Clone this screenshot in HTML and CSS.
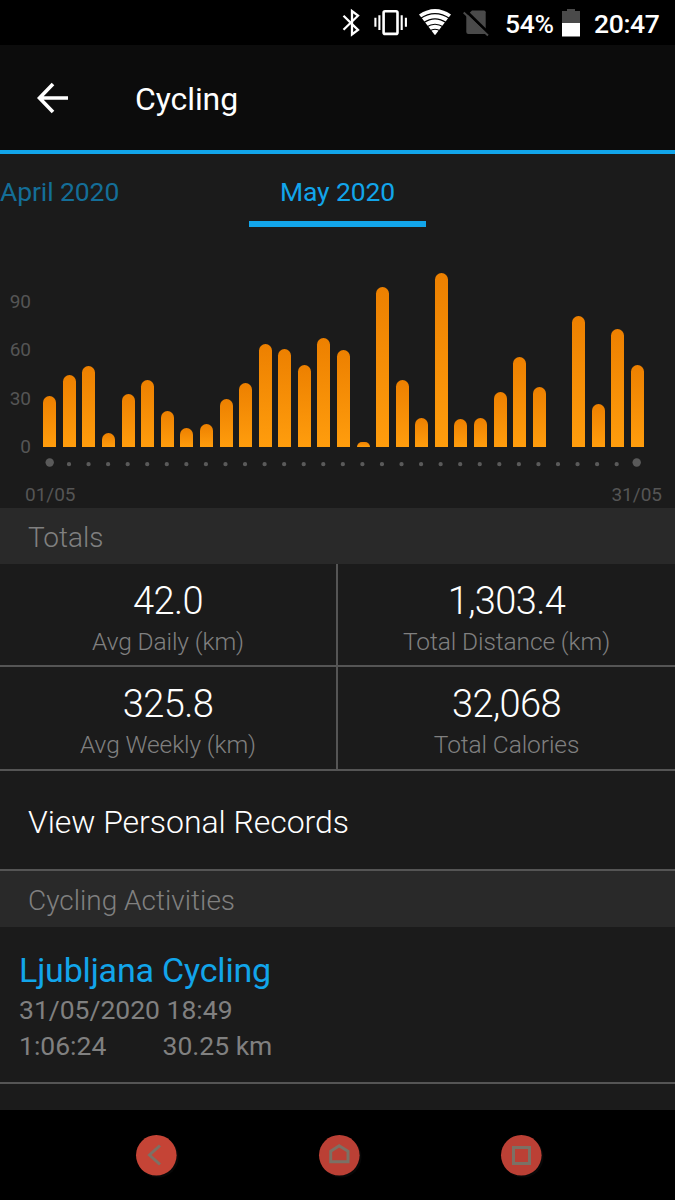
FILE: index.html
```html
<!DOCTYPE html>
<html lang="en">
<head>
<meta charset="utf-8">
<title>Cycling</title>
<link rel="stylesheet" href="styles.css">
</head>
<body>
<div class="screen">
  <div class="status">
    <svg class="status-icons" width="153" height="44" viewBox="0 0 153 44">
      <path d="M2.500 15.800L17 30L11 34.500V11L17 15.700L2.500 29.800" fill="none" stroke="#fff" stroke-width="2.300"/>
      <g fill="none" stroke="#fff">
        <rect x="42.600" y="11.300" width="13.900" height="22.600" rx="1.500" stroke-width="2.600"/>
        <path d="M38.400 15.300v14.700M34.400 17.700v9M60.700 15.300v14.700M64.900 17.700v9" stroke-width="2.100"/>
      </g>
      <path d="M78 14.500Q94 3.500 110 14.500L94 35.300Z" fill="#fff"/>
      <path d="M79 18.700Q94 8.500 109 18.700M82.500 22.800Q94 15 105.500 22.800M85.500 27Q94 21.500 102.500 27M88.500 31Q94 27.500 99.500 31" fill="none" stroke="#000" stroke-width="1.200"/>
      <path d="M125.300 16L131 10.500H143Q144.700 10.500 144.700 12.300V34H127.300Q125.300 34 125.300 32Z" fill="#4a4a4a"/>
      <path d="M124.500 10.500L149 34.500" stroke="#000" stroke-width="3"/>
      <path d="M122.700 12.500L147 35.500" stroke="#4a4a4a" stroke-width="2"/>
    </svg>
    <span class="percent">54%</span>
    <svg class="battery" width="18" height="28" viewBox="0 0 18 28">
      <path d="M5 0h8v2h5v12H0V2h5z" fill="#4a4a4a"/><path d="M0 14h18v13.500H0z" fill="#fff"/>
    </svg>
    <span class="clock">20:47</span>
  </div>
  <header class="appbar">
    <svg class="back" width="34" height="34" viewBox="0 0 34 34"><path d="M17 3L3.500 17L17 31M3.500 17H32" fill="none" stroke="#fff" stroke-width="3.600"/></svg>
    <h1 class="title">Cycling</h1>
  </header>
  <nav class="tabs">
    <span class="tab tab-prev">April 2020</span>
    <span class="tab tab-active">May 2020</span>
  </nav>
  <section class="chart">
    <div class="axis"><span>90</span><span>60</span><span>30</span><span>0</span></div>
    <div class="plot">
      <div class="bars">
        <i style="height:51.5px"></i><i style="height:72px"></i><i style="height:81px"></i><i style="height:14.5px"></i><i style="height:53px"></i><i style="height:67px"></i><i style="height:36.5px"></i><i style="height:19px"></i><i style="height:23px"></i><i style="height:48.5px"></i><i style="height:64.5px"></i><i style="height:103.5px"></i><i style="height:98px"></i><i style="height:82px"></i><i style="height:109px"></i><i style="height:97px"></i><i style="height:5px"></i><i style="height:160px"></i><i style="height:67px"></i><i style="height:29px"></i><i style="height:174.5px"></i><i style="height:27.700px"></i><i style="height:29.500px"></i><i style="height:55px"></i><i style="height:90px"></i><i style="height:60px"></i><i style="height:0"></i><i style="height:131.500px"></i><i style="height:43px"></i><i style="height:118.500px"></i><i style="height:82px"></i>
      </div>
      <svg class="dots" width="607" height="30" viewBox="0 0 607 30">
        <path d="M29 17.200H580" fill="none" stroke="#5a5a5a" stroke-width="4.300" stroke-linecap="round" stroke-dasharray="0 19.560"/>
        <circle cx="9.700" cy="15.500" r="4.200" fill="#5a5a5a"/><circle cx="596.700" cy="15.500" r="4.200" fill="#5a5a5a"/>
      </svg>
    </div>
    <div class="range"><span>01/05</span><span>31/05</span></div>
  </section>
  <h2 class="section">Totals</h2>
  <div class="stats">
    <div class="stat"><strong>42.0</strong><span>Avg Daily (km)</span></div>
    <div class="stat"><strong>1,303.4</strong><span>Total Distance (km)</span></div>
    <div class="stat"><strong>325.8</strong><span>Avg Weekly (km)</span></div>
    <div class="stat"><strong>32,068</strong><span>Total Calories</span></div>
  </div>
  <div class="records">View Personal Records</div>
  <h2 class="section">Cycling Activities</h2>
  <article class="activity">
    <h3 class="name">Ljubljana Cycling</h3>
    <div class="meta">31/05/2020 18:49</div>
    <div class="meta meta-row"><span class="duration">1:06:24</span><span>30.25 km</span></div>
  </article>
  <footer class="navbar">
    <svg class="key" width="44" height="44" viewBox="0 0 44 44"><circle class="shadow" cx="23" cy="23" r="20.500"/><circle cx="21.300" cy="21.300" r="20.300" fill="#c54436"/><path d="M25 11.500L14.500 21L25 30.500" class="glyph"/></svg>
    <svg class="key" width="44" height="44" viewBox="0 0 44 44"><circle class="shadow" cx="23" cy="23" r="20.500"/><circle cx="21.300" cy="21.300" r="20.300" fill="#bb4035"/><path d="M12.700 17.300L21.200 11.700L30 17.300V27.700H12.700Z" class="glyph"/></svg>
    <svg class="key" width="44" height="44" viewBox="0 0 44 44"><circle class="shadow" cx="23" cy="23" r="20.500"/><circle cx="21.300" cy="21.300" r="20.300" fill="#bb4035"/><path d="M13.500 13.500H29.500V29.500H13.500Z" class="glyph"/></svg>
  </footer>
</div>
</body>
</html>
```
FILE: styles.css
```css
* { box-sizing: border-box; }
body { margin: 0; background: #000; font-family: Roboto, "Liberation Sans", sans-serif; }
h1, h2, h3 { margin: 0; font-weight: 400; }
svg { display: block; flex: none; }
.screen { width: 675px; height: 1200px; display: flex; flex-direction: column; overflow: hidden; background: #1b1b1b; white-space: nowrap; }
.screen > * { flex: none; }

.status { height: 45px; padding-left: 341px; display: flex; align-items: flex-start; background: #000; color: #fff; font-size: 26.500px; font-weight: 500; line-height: 48px; letter-spacing: -0.350px; }
.percent { width: 56px; margin-left: 11px; }
.battery { margin: 9px 14px 0 1px; }

.appbar { height: 109px; border-bottom: 4px solid #12a5ea; padding-left: 36px; display: flex; align-items: center; background: #0c0c0c; color: #fff; }
.title { margin: 2px 0 0 65px; font-size: 32px; line-height: 40px; letter-spacing: -0.100px; }

.tabs { height: 73px; display: flex; color: #12a5ea; font-size: 26.500px; line-height: 75px; letter-spacing: -0.100px; }
.tab-prev { width: 249px; color: #146e98; }
.tab-active { width: 177px; text-align: center; border-bottom: 6px solid #12a5ea; }

.chart { height: 281px; display: grid; grid-template-columns: 40px 607px; grid-template-rows: 250px 31px; color: #555; font-size: 19px; }
.axis { padding-top: 63px; width: 31px; display: flex; flex-direction: column; gap: 24.300px; line-height: 24px; text-align: right; }
.bars { height: 220px; display: grid; grid-template-columns: repeat(31, 1fr); justify-items: center; align-items: end; }
.bars i { width: 13px; border-radius: 6.500px 6.500px 0 0; background: linear-gradient(#ed8000, #ff9d0d); }
.range { grid-column: 1 / 3; width: 675px; padding: 5px 13px 0 25px; display: flex; justify-content: space-between; line-height: 26px; }

.section { height: 56px; padding-left: 28px; background: #292929; color: #808080; font-size: 28px; font-weight: 300; line-height: 59px; }
.stats { display: grid; grid-template-columns: 338px 337px; grid-template-rows: 103px 104px; }
.stat { padding-top: 13px; border-bottom: 2px solid #555; display: flex; flex-direction: column; align-items: center; }
.stat:nth-child(odd) { border-right: 2px solid #555; }
.stat strong { font-size: 38px; font-weight: 300; line-height: 48px; letter-spacing: -0.600px; color: #fff; }
.stat span { font-size: 24.500px; font-weight: 300; line-height: 34px; letter-spacing: -0.100px; color: #808080; }
.records { height: 100px; padding-left: 28px; border-bottom: 2px solid #555; color: #fff; font-size: 32px; font-weight: 300; line-height: 102px; letter-spacing: -0.050px; }
.activity { height: 157px; padding: 22px 19px 0; border-bottom: 2px solid #555; }
.name { color: #12a5ea; font-size: 34px; line-height: 43px; letter-spacing: -0.180px; }
.meta { color: #808080; font-size: 26.500px; line-height: 36px; }
.meta-row { display: flex; }
.duration { width: 143.500px; }

.navbar { height: 90px; margin-top: auto; padding: 24px 0 0 135px; display: flex; gap: 138.500px; background: #000; }
.shadow { fill: #080808; }
.glyph { fill: none; stroke: #7b7165; stroke-width: 3; }
```
